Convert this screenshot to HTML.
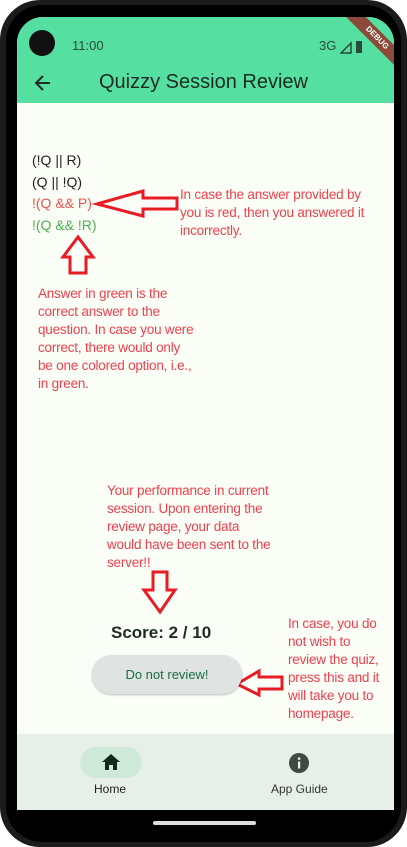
<!DOCTYPE html><html><head><style>
body{margin:0;width:407px;height:847px;background:#fff;position:relative;overflow:hidden;font-family:"Liberation Sans",sans-serif}
.phone{position:absolute;left:0;top:0;width:407px;height:847px;background:#1b1b1b;border-radius:40px}
.inner{position:absolute;left:6px;top:5px;width:395px;height:837px;background:#000;border-radius:36px}
.screen{position:absolute;left:17px;top:17px;width:377px;height:793px;background:#fbfdf7;border-radius:26px 26px 0 0;overflow:hidden}
.bar{position:absolute;left:0;top:0;width:377px;height:86px;background:#55dfa0}
.a{position:absolute;color:#f2404c;font-size:13.5px;line-height:18px;letter-spacing:-0.2px}
</style></head><body>
<div class="phone"><div class="inner"></div></div>
<div class="screen">
<div class="bar"></div>
<div style="position:absolute;left:12px;top:13px;width:26px;height:26px;border-radius:50%;background:#111"></div>
<div style="position:absolute;left:55px;top:21px;font-size:13px;color:#2b4a3c">11:00</div>
<div style="position:absolute;left:302px;top:21px;font-size:13px;color:#2b4a3c">3G</div>
<svg style="position:absolute;left:323px;top:23px" width="28" height="14"><path d="M1 13L11 3V13Z" fill="none" stroke="#2b4a3c" stroke-width="1.5"/><rect x="16" y="1" width="6" height="12" fill="#2b4a3c"/></svg>
<div style="position:absolute;left:320px;top:14px;width:80px;height:14px;background:#8b4a3a;color:#fff;font-size:8px;font-weight:bold;text-align:center;line-height:14px;transform:rotate(45deg)">DEBUG</div>
<svg style="position:absolute;left:17px;top:57px" width="18" height="18"><path d="M16 9H3M9 2L2 9l7 7" fill="none" stroke="#1d2b24" stroke-width="2"/></svg>
<div style="position:absolute;left:82px;top:54px;font-size:20px;color:#1d2b24">Quizzy Session Review</div>
<div style="position:absolute;left:15px;top:133px;font-size:14px;line-height:21.5px;color:#222">(!Q || R)<br>(Q || !Q)<br><span style="color:#ef5350">!(Q &amp;&amp; P)</span><br><span style="color:#4caf50">!(Q &amp;&amp; !R)</span></div>
<svg style="position:absolute;left:0;top:0" width="377" height="793"><g fill="none" stroke="#e81c24" stroke-width="3">
<path d="M160 181H126V174L80 187L126 199V192H160Z"/>
<path d="M53 256V240H46L61 220L76 240H69V256Z"/>
<path d="M136 555V573H127L143 595L158 573H150V555Z"/>
<path d="M265 660H242V654L220 667L242 678V672H265Z"/></g></svg>
<div class="a" style="left:163px;top:169px">In case the answer provided by<br>you is red, then you answered it<br>incorrectly.</div>
<div class="a" style="left:21px;top:268px">Answer in green is the<br>correct answer to the<br>question. In case you were<br>correct, there would only<br>be one colored option, i.e.,<br>in green.</div>
<div class="a" style="left:90px;top:465px">Your performance in current<br>session. Upon entering the<br>review page, your data<br>would have been sent to the<br>server!!</div>
<div class="a" style="left:271px;top:598px">In case, you do<br>not wish to<br>review the quiz,<br>press this and it<br>will take you to<br>homepage.</div>
<div style="position:absolute;left:94px;top:606px;font-size:17px;font-weight:bold;color:#1d2b24">Score: 2 / 10</div>
<div style="position:absolute;left:75px;top:638px;width:150px;height:39px;border-radius:20px;background:#dfe3e1;box-shadow:0 1px 2px rgba(0,0,0,.25);color:#1b6e45;font-size:13px;text-align:center;line-height:39px">Do not review!</div>
<div style="position:absolute;left:0;top:717px;width:377px;height:76px;background:#e6f0e8"></div>
<div style="position:absolute;left:63px;top:730px;width:62px;height:31px;border-radius:16px;background:#cfe9d8"></div>
<svg style="position:absolute;left:84px;top:736px" width="20" height="18"><path d="M10 1L1 9h3v8h4v-5h4v5h4V9h3Z" fill="#0f2a1c"/></svg>
<div style="position:absolute;left:77px;top:765px;font-size:12px;color:#222">Home</div>
<svg style="position:absolute;left:272px;top:736px" width="20" height="20"><circle cx="10" cy="10" r="10" fill="#404943"/><rect x="9" y="8.5" width="2.2" height="7" fill="#e6f0e8"/><circle cx="10.1" cy="5.6" r="1.3" fill="#e6f0e8"/></svg>
<div style="position:absolute;left:254px;top:765px;font-size:12px;color:#333">App Guide</div>
</div>
<div style="position:absolute;left:153px;top:821px;width:103px;height:4px;border-radius:2px;background:#ddd"></div>
</body></html>
